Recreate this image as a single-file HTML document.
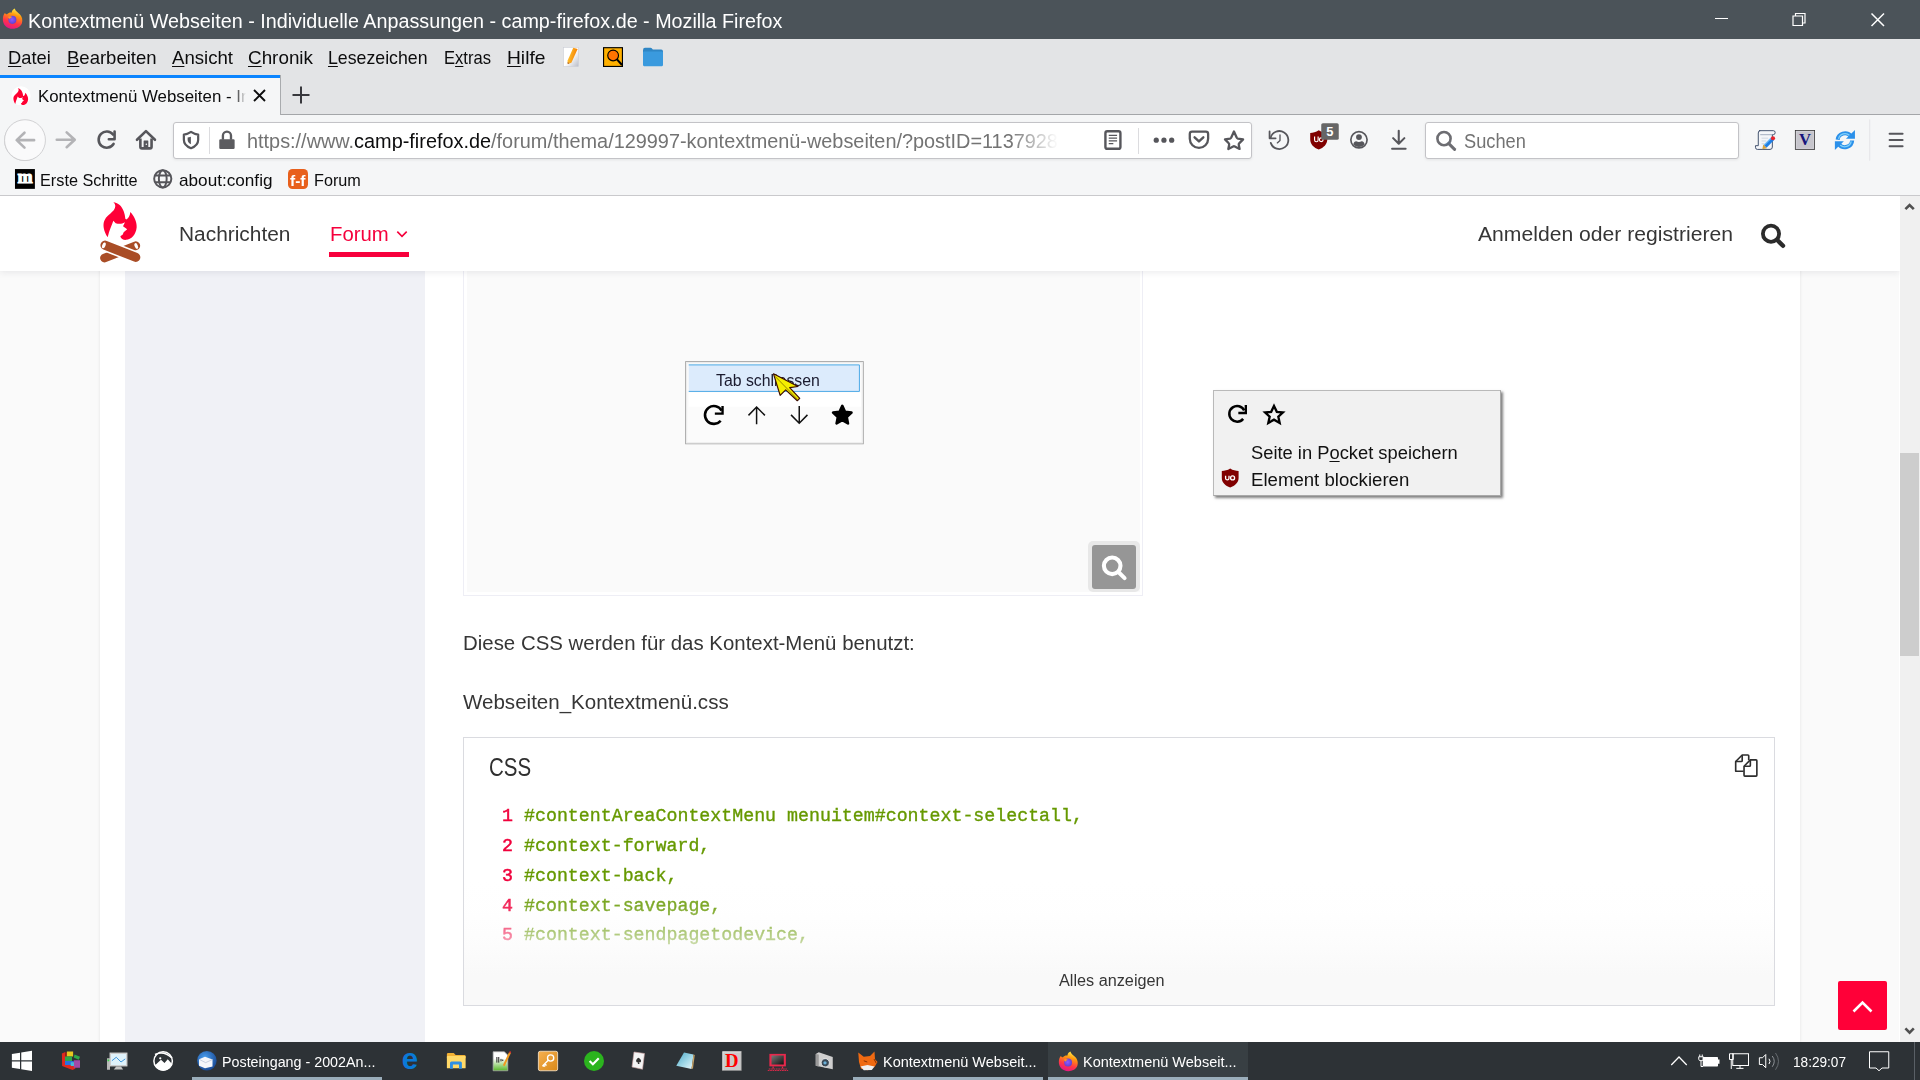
<!DOCTYPE html>
<html lang="de"><head><meta charset="utf-8"><title>Kontextmenü Webseiten - Individuelle Anpassungen - camp-firefox.de - Mozilla Firefox</title>
<style>
html,body{margin:0;padding:0;width:1920px;height:1080px;overflow:hidden;background:#fff;font-family:"Liberation Sans",sans-serif;}
body{position:relative;}
div,svg,.t{position:absolute;box-sizing:border-box;}
.t{white-space:nowrap;line-height:1;transform-origin:0 0;}
u{text-decoration:underline;text-decoration-thickness:1px;text-underline-offset:2px;}

</style></head>
<body>
<main>
<div style="left:0px;top:196px;width:1899px;height:846px;background:#fafafa;"></div>
<div style="left:100px;top:196px;width:1700px;height:846px;background:#fff;box-shadow:0 0 3px rgba(0,0,0,.10);"></div>
<div style="left:125px;top:270px;width:300px;height:772px;background:#f0f1f6;"></div>
<div style="left:463px;top:196px;width:680.3px;height:399.7px;background:#fff;border:1px solid #eeeef5;"></div>
<div style="left:466.5px;top:196px;width:673.5px;height:396px;background:#fafafa;"></div>
<div style="left:1088.2px;top:541px;width:51.4px;height:51px;background:#e8e8e8;border-radius:5px;"></div>
<div style="left:1092px;top:544.8px;width:44px;height:44.2px;background:#969696;border-radius:3px;"></div>
<svg style="left:1092px;top:544.8px;" width="44" height="44.2" viewBox="0 0 44 44.2"><circle cx="20.2" cy="20.8" r="8.3" fill="none" stroke="#fff" stroke-width="4.1"/><path d="M26.4 27 L32.6 33.2" stroke="#fff" stroke-width="4" stroke-linecap="round"/></svg>
<svg style="left:680px;top:355px;" width="190" height="95" viewBox="0 0 1920 960">
<rect x="57" y="67" width="1795" height="830" fill="#fbfbfb" stroke="#a3a3a3" stroke-width="10"/>
<rect x="67" y="77" width="1775" height="810" fill="none" stroke="#ececec" stroke-width="12"/>
<rect x="88" y="378" width="1740" height="145" fill="#ffffff"/>
<rect x="88" y="100" width="1725" height="268" fill="#dcebfc"/>
<path d="M88 100 H1813 V368 H88" fill="none" stroke="#4aa9e6" stroke-width="10"/>
<g fill="none" stroke="#000" stroke-width="26">
<path d="M421 562 A90 90 0 1 0 411 664" stroke-linecap="butt"/>
<path d="M430 516 V592 H352" stroke-width="24"/>
</g>
<g fill="none" stroke="#111" stroke-width="15">
<path d="M774 700 V525 M692 610 L774 526 L858 610"/>
<path d="M1205 515 V690 M1122 605 L1205 690 L1288 605"/>
</g>
<path d="M1640 514 L1667.6 574 L1733.2 581.7 L1684.7 626.5 L1697.6 691.3 L1640 659 L1582.4 691.3 L1595.3 626.5 L1546.8 581.7 L1612.4 574 Z" fill="#000" stroke="#000" stroke-width="26" stroke-linejoin="round"/>
</svg>
<span class="t" style="left:716.1px;top:371.66px;font-size:17.3px;color:#1a1a2e;transform:scaleX(0.9166);">Tab schliessen</span>
<svg style="left:680px;top:355px;" width="190" height="95" viewBox="0 0 1920 960">
<path d="M945 190 L1012 408 L1068 352 L1185 462 L1210 438 L1108 330 L1192 318 Z" fill="#f6ee00" stroke="#3c0c00" stroke-width="12" stroke-linejoin="round"/>
<path d="M960 215 L1190 450" stroke="#7a6a00" stroke-width="8" fill="none"/>
</svg>
<div style="left:1213px;top:390px;width:288px;height:106px;background:#f1f1f1;border:1px solid #b9b9b9;border-right-color:#a8a8a8;border-bottom-color:#a8a8a8;box-shadow:2px 2px 2.5px rgba(0,0,0,.5);"></div>
<svg style="left:1205px;top:385px;" width="160" height="80" viewBox="0 0 1920 960">
<g fill="none" stroke="#000" stroke-width="30">
<path d="M470 304 A94 94 0 1 0 458 406"/>
<path d="M490 240 V336 H400" stroke-width="28"/>
</g>
<path d="M828 252 L862 322 L935 330 L880 380 L896 455 L828 416 L760 455 L776 380 L721 330 L794 322 Z" fill="none" stroke="#000" stroke-width="28" stroke-linejoin="miter"/>
</svg>
<span class="t" style="left:1251.2px;top:443.76px;font-size:18px;color:#111;transform:scaleX(1.0181);">Seite in P<u>o</u>cket speichern</span>
<span class="t" style="left:1251.4px;top:471.46px;font-size:18px;color:#111;transform:scaleX(1.0340);">Element blockieren</span>
<svg style="left:1220.8px;top:468px;" width="18.4" height="20" viewBox="0 0 18.4 20"><path d="M9.2 0.6 C6.5 2.4 3.6 3 0.8 3 V10 C0.8 14.6 4.4 17.6 9.2 19.6 C14 17.6 17.6 14.6 17.6 10 V3 C14.8 3 11.9 2.4 9.2 0.6 Z" fill="#800000"/><path d="M4.6 7.8 V10.2 A1.7 1.7 0 0 0 8 10.2 V7.8" fill="none" stroke="#fff" stroke-width="1.3"/><circle cx="11.6" cy="9.9" r="2" fill="none" stroke="#fff" stroke-width="1.3"/></svg>
<div style="left:0px;top:196px;width:1900px;height:75px;background:#fff;box-shadow:0 1px 7px rgba(40,40,60,.10);"></div>
<span class="t" style="left:179.4px;top:223.87px;font-size:20px;color:#363636;transform:scaleX(1.0439);">Nachrichten</span>
<span class="t" style="left:329.6px;top:223.87px;font-size:20px;color:#f5003c;transform:scaleX(1.0156);">Forum</span>
<svg style="left:396px;top:229.5px;" width="12" height="8.5" viewBox="0 0 12 8.5"><path d="M1.3 1.6 L6 6.3 L10.7 1.6" fill="none" stroke="#f5003c" stroke-width="1.6"/></svg>
<div style="left:329px;top:251.7px;width:80px;height:5.8px;background:#f8003c;"></div>
<span class="t" style="left:1477.5px;top:223.87px;font-size:20px;color:#363636;transform:scaleX(1.0570);">Anmelden oder registrieren</span>
<svg style="left:1760px;top:223px;" width="26" height="26" viewBox="0 0 26 26"><circle cx="11" cy="10.7" r="8.1" fill="none" stroke="#2b2b2b" stroke-width="3.8"/><path d="M17 16.8 L23 22.8" stroke="#2b2b2b" stroke-width="4.4" stroke-linecap="round"/></svg>
<span class="t" style="left:462.7px;top:634.09px;font-size:19.5px;color:#363636;transform:scaleX(1.0473);">Diese CSS werden für das Kontext-Menü benutzt:</span>
<span class="t" style="left:462.8px;top:693.09px;font-size:19.5px;color:#363636;transform:scaleX(1.0535);">Webseiten_Kontextmenü.css</span>
<div style="left:463px;top:737px;width:1312px;height:268.5px;background:#fff;border:1px solid #dadbe0;"></div>
<svg style="left:1720px;top:744px;" width="60" height="44" viewBox="0 0 1473 1080"><g fill="none" stroke="#2e2e2e" stroke-width="40" stroke-linejoin="round"><path d="M705 400 V290 Q705 270 685 270 H545 L385 430 V670 H580"/><path d="M545 270 V410 Q545 430 525 430 H385"/><path d="M745 390 H885 Q905 390 905 410 V770 Q905 790 885 790 H610 Q590 790 590 770 V545 Z"/><path d="M745 390 V525 Q745 545 725 545 H590"/></g></svg>
<span class="t" style="left:489.4px;top:754.84px;font-size:25px;color:#2f2f2f;transform:scaleX(0.8190);">CSS</span>
<span class="t" style="left:502.3px;top:807.08px;font-size:18.27px;color:#f0003c;font-family:'Liberation Mono', monospace;transform:scaleX(0.9992);-webkit-text-stroke:0.5px #f0003c;">1</span>
<span class="t" style="left:524.2px;top:807.08px;font-size:18.27px;color:#669900;font-family:'Liberation Mono', monospace;transform:scaleX(0.9999);-webkit-text-stroke:0.35px #669900;">#contentAreaContextMenu menuitem#context-selectall,</span>
<span class="t" style="left:502.3px;top:836.98px;font-size:18.27px;color:#f0003c;font-family:'Liberation Mono', monospace;transform:scaleX(0.9992);-webkit-text-stroke:0.5px #f0003c;">2</span>
<span class="t" style="left:524.2px;top:836.98px;font-size:18.27px;color:#669900;font-family:'Liberation Mono', monospace;transform:scaleX(0.9999);-webkit-text-stroke:0.35px #669900;">#context-forward,</span>
<span class="t" style="left:502.3px;top:866.78px;font-size:18.27px;color:#f0003c;font-family:'Liberation Mono', monospace;transform:scaleX(0.9992);-webkit-text-stroke:0.5px #f0003c;">3</span>
<span class="t" style="left:524.2px;top:866.78px;font-size:18.27px;color:#669900;font-family:'Liberation Mono', monospace;transform:scaleX(0.9998);-webkit-text-stroke:0.35px #669900;">#context-back,</span>
<span class="t" style="left:502.3px;top:896.58px;font-size:18.27px;color:#f0003c;font-family:'Liberation Mono', monospace;transform:scaleX(0.9992);-webkit-text-stroke:0.5px #f0003c;">4</span>
<span class="t" style="left:524.2px;top:896.58px;font-size:18.27px;color:#669900;font-family:'Liberation Mono', monospace;transform:scaleX(0.9998);-webkit-text-stroke:0.35px #669900;">#context-savepage,</span>
<span class="t" style="left:502.3px;top:926.38px;font-size:18.27px;color:#f0003c;font-family:'Liberation Mono', monospace;transform:scaleX(0.9992);-webkit-text-stroke:0.5px #f0003c;">5</span>
<span class="t" style="left:524.2px;top:926.38px;font-size:18.27px;color:#669900;font-family:'Liberation Mono', monospace;transform:scaleX(0.9999);-webkit-text-stroke:0.35px #669900;">#context-sendpagetodevice,</span>
<div style="left:464px;top:880px;width:1310px;height:124.5px;background:linear-gradient(to bottom,rgba(252,252,252,0) 0%,rgba(252,252,252,.2) 25%,rgba(251,251,251,.6) 49%,rgba(250,250,250,.95) 68%,#f9f9f9 76%,#f9f9f9 100%);"></div>
<span class="t" style="left:1059.4px;top:972.76px;font-size:16px;color:#363636;transform:scaleX(1.0146);">Alles anzeigen</span>
<div style="left:1838px;top:981px;width:49px;height:49px;background:#ff0038;border-radius:2px;"></div>
<svg style="left:1850px;top:998px;" width="25" height="17" viewBox="0 0 25 17"><path d="M3.5 13.5 L12.5 4.5 L21.5 13.5" fill="none" stroke="#fff" stroke-width="2.6"/></svg>
<div style="left:1900px;top:196px;width:20px;height:846px;background:#f0f0f0;"></div>
<div style="left:1900px;top:453px;width:19px;height:203px;background:#cdcdcd;"></div>
<svg style="left:1903px;top:201px;" width="14" height="10" viewBox="0 0 14 10"><path d="M2.4 8.2 L6.6 4 L10.8 8.2" fill="none" stroke="#505050" stroke-width="2.6"/></svg>
<svg style="left:1903px;top:1026px;" width="14" height="10" viewBox="0 0 14 10"><path d="M2.4 2.4 L6.6 6.6 L10.8 2.4" fill="none" stroke="#505050" stroke-width="2.6"/></svg>
</main>
<header>
<div style="left:0px;top:0px;width:1920px;height:39px;background:#4b5359;"></div>
<span class="t" style="left:27.6px;top:11.98px;font-size:19.4px;color:#fff;transform:scaleX(1.0178);">Kontextmenü Webseiten - Individuelle Anpassungen - camp-firefox.de - Mozilla Firefox</span>
<div style="left:1715px;top:18px;width:13px;height:1px;background:#fff;"></div>
<svg style="left:1792px;top:12px;" width="14" height="14" viewBox="0 0 14 14"><path d="M1 4 H10.5 V13.5 H1 Z M3.5 4 V1.5 H13 V11 H10.5" fill="none" stroke="#fff" stroke-width="1.2"/></svg>
<svg style="left:1870px;top:11.5px;" width="16" height="15.0" viewBox="0 0 16 15.0"><path d="M1.5 1.5 L14 14 M14 1.5 L1.5 14" stroke="#fff" stroke-width="1.5"/></svg>
<div style="left:0px;top:39px;width:1920px;height:75.5px;background:#e3e4e6;"></div>
<span class="t" style="left:8.3px;top:49.19px;font-size:18.2px;color:#0c0c0d;transform:scaleX(1.0054);"><u>D</u>atei</span>
<span class="t" style="left:66.5px;top:49.19px;font-size:18.2px;color:#0c0c0d;transform:scaleX(1.0172);"><u>B</u>earbeiten</span>
<span class="t" style="left:171.5px;top:49.19px;font-size:18.2px;color:#0c0c0d;transform:scaleX(1.0225);"><u>A</u>nsicht</span>
<span class="t" style="left:248px;top:49.19px;font-size:18.2px;color:#0c0c0d;transform:scaleX(1.0369);"><u>C</u>hronik</span>
<span class="t" style="left:328px;top:49.19px;font-size:18.2px;color:#0c0c0d;transform:scaleX(0.9741);"><u>L</u>esezeichen</span>
<span class="t" style="left:444px;top:49.19px;font-size:18.2px;color:#0c0c0d;transform:scaleX(0.9115);">E<u>x</u>tras</span>
<span class="t" style="left:507px;top:49.19px;font-size:18.2px;color:#0c0c0d;transform:scaleX(1.0552);"><u>H</u>ilfe</span>
<div style="left:0px;top:114px;width:1920px;height:1px;background:#a4a6a9;"></div>
<div style="left:0px;top:75px;width:280.5px;height:40px;background:#f5f6f7;border-right:1px solid #a9abae;"></div>
<div style="left:0px;top:75px;width:280px;height:3px;background:#0a84ff;"></div>
<div style="left:38.4px;top:84px;width:209px;height:26px;overflow:hidden;-webkit-mask-image:linear-gradient(to right,#000 0,#000 196px,transparent 208px);mask-image:linear-gradient(to right,#000 0,#000 196px,transparent 208px);">
<span class="t" style="left:0px;top:4.55px;font-size:16.6px;color:#0c0c0d;transform:scaleX(1.0155);">Kontextmenü Webseiten - Individuelle</span>
</div>
<svg style="left:252px;top:89px;" width="15" height="13" viewBox="0 0 15 13"><path d="M2 1 L13 12 M13 1 L2 12" stroke="#0c0c0d" stroke-width="1.9"/></svg>
<svg style="left:291px;top:84.5px;" width="20" height="20.0" viewBox="0 0 20 20.0"><path d="M10 1.5 V18.5 M1.5 10 H18.5" stroke="#38383d" stroke-width="2"/></svg>
<div style="left:0px;top:115px;width:1920px;height:80px;background:#f5f6f7;"></div>
<div style="left:0px;top:195px;width:1920px;height:1px;background:#c9c9cc;"></div>
<div style="left:4.3px;top:119.8px;width:41.2px;height:41.2px;border:1px solid #cfcfd2;border-radius:50%;background:#fbfbfc;"></div>
<div style="left:173px;top:122px;width:1079px;height:37px;background:#fff;border:1px solid #c3c3c7;border-radius:3px;box-shadow:0 1px 3px rgba(0,0,0,.08);"></div>
<div style="left:209px;top:127px;width:1px;height:26.5px;background:#dcdcdf;"></div>
<div style="left:1138px;top:128.3px;width:1px;height:25.4px;background:#dcdcdf;"></div>
<span class="t" style="left:246.6px;top:130.65px;font-size:20.5px;color:#0c0c0d;transform:scaleX(0.9693);-webkit-mask-image:linear-gradient(to right,#000 0,#000 94%,transparent 100%);"><span style="color:#737373">https://www.</span>camp-firefox.de<span style="color:#737373">/forum/thema/129997-kontextmenü-webseiten/?postID=1137928</span></span>
<div style="left:1425px;top:122px;width:314px;height:37px;background:#fff;border:1px solid #c3c3c7;border-radius:3px;box-shadow:0 1px 3px rgba(0,0,0,.08);"></div>
<span class="t" style="left:1464.2px;top:130.65px;font-size:20.5px;color:#737373;transform:scaleX(0.8888);">Suchen</span>
<svg style="left:0px;top:115px;" width="250" height="80" viewBox="0 0 1920 614">
<circle cx="192" cy="193" r="157" fill="#fafafb" stroke="#cdcdd0" stroke-width="7"/>
<g fill="none" stroke="#b3b3b6" stroke-width="20" stroke-linecap="round" stroke-linejoin="round">
<path d="M130 193 H262 M188 136 L128 193 L188 250"/>
<path d="M436 190 H570 M512 133 L574 190 L512 247"/>
</g>
<g fill="none" stroke="#56565b" stroke-width="20">
<path d="M868 150 A62 62 0 1 0 872 222" stroke-linecap="round"/>
<path d="M880 127 V186 H836" stroke-linejoin="round" stroke-linecap="round"/>
<path d="M1052 190 L1121 124 L1190 190" stroke-linecap="round" stroke-linejoin="round"/>
<path d="M1078 180 V244 Q1078 256 1090 256 H1152 Q1164 256 1164 244 V180" stroke-linejoin="round"/>
</g>
<rect x="1103" y="196" width="36" height="56" rx="4" fill="#56565b"/>
<circle cx="1124" cy="225" r="6" fill="#f5f6f7"/>
<path d="M1467 130 C1445 145 1425 150 1412 150 V190 C1412 222 1440 245 1467 255 C1494 245 1522 222 1522 190 V150 C1509 150 1489 145 1467 130 Z" fill="none" stroke="#56565b" stroke-width="17" stroke-linejoin="round"/>
<path d="M1466 166 C1456 170 1448 172 1441 172 V192 C1441 206 1452 218 1466 225 Z" fill="#56565b"/>
<rect x="1684" y="186" width="118" height="74" rx="9" fill="#5b5b5f"/>
<path d="M1712 190 V158 A31 31 0 0 1 1774 158 V190" fill="none" stroke="#5b5b5f" stroke-width="18"/>
<rect x="115" y="415" width="153" height="152" fill="#000"/>
<text x="192" y="525" font-family="'Liberation Serif',serif" font-weight="bold" font-size="150" fill="#fff" stroke="#fff" stroke-width="9" text-anchor="middle" textLength="116" lengthAdjust="spacingAndGlyphs">m</text>
<g fill="none" stroke="#55555a" stroke-width="15">
<circle cx="1250" cy="490" r="66"/>
<ellipse cx="1250" cy="490" rx="30" ry="66"/>
<path d="M1190 465 H1310 M1190 516 H1310"/>
</g>
</svg>
<svg style="left:1040px;top:110px;" width="400" height="90" viewBox="0 0 1920 432">
<g fill="none" stroke="#56565b">
<rect x="314" y="102" width="72" height="84" rx="9" stroke-width="11.5"/>
<path d="M330 122 H370 M330 135 H370 M330 148 H370 M330 161 H352" stroke-width="6"/>
</g>
<g fill="#56565b"><circle cx="558" cy="145" r="12.5"/><circle cx="595" cy="145" r="12.5"/><circle cx="632" cy="145" r="12.5"/></g>
<path d="M730 104 H796 Q807 104 807 115 V138 A44 44 0 0 1 719 138 V115 Q719 104 730 104 Z" fill="none" stroke="#56565b" stroke-width="11"/>
<path d="M742 131 L763 151 L784 131" fill="none" stroke="#56565b" stroke-width="11.5" stroke-linecap="round" stroke-linejoin="round"/>
<path d="M931 103 L944 132 Q946 136 950 137 L975 141 L956 160 Q953 163 954 167 L958 187 L935 175 Q931 173 927 175 L904 187 L908 167 Q909 163 906 160 L888 141 L912 137 Q916 136 918 132 Z" fill="none" stroke="#56565b" stroke-width="11" stroke-linejoin="round"/>
<g fill="none" stroke="#56565b" stroke-width="8.6" stroke-linecap="round" stroke-linejoin="round">
<path d="M1106.5 135.4 A43.2 43.2 0 1 1 1107.7 157.8"/>
<path d="M1102 103 V136 H1131"/>
<path d="M1152 119 V146 L1139 158" stroke-width="6.4"/>
</g>
<path d="M1338 97 C1324 106 1310 110 1297 110 V140 C1297 165 1315 180 1338 190 C1361 180 1379 165 1379 140 V110 C1366 110 1352 106 1338 97 Z" fill="#800000"/>
<path d="M1318 127 V144 A8.5 8.5 0 0 0 1335 144 V127" fill="none" stroke="#fff" stroke-width="5.5"/>
<circle cx="1350" cy="143" r="9" fill="none" stroke="#fff" stroke-width="5.5"/>
<rect x="1350" y="63" width="84" height="80" rx="8" fill="#666"/>
<text x="1391" y="125" font-family="'Liberation Sans',sans-serif" font-weight="bold" font-size="62" fill="#fff" text-anchor="middle">5</text>
<circle cx="1531" cy="143" r="39" fill="none" stroke="#56565b" stroke-width="8"/>
<circle cx="1531" cy="130" r="14" fill="#56565b"/>
<path d="M1504 166 Q1505 152 1518 150 Q1531 156 1544 150 Q1557 152 1558 166 Q1546 178 1531 178 Q1516 178 1504 166 Z" fill="#56565b"/>
<g fill="none" stroke="#56565b" stroke-width="10" stroke-linecap="round" stroke-linejoin="round">
<path d="M1722 100 V160 M1695 135 L1722 162 L1749 135"/>
<path d="M1690 186 H1755"/>
</g>
</svg>
<svg style="left:1740px;top:118px;" width="180" height="45" viewBox="0 0 1920 480">
<path d="M205 135 H355 Q375 135 375 155 Q375 178 355 178 H345 V310 Q345 335 320 335 H185 Q165 335 165 312 V295 H195 V160 Q195 135 215 135 Z" fill="#f3f5f9" stroke="#3a4a66" stroke-width="10" stroke-linejoin="round"/>
<path d="M215 178 H345" stroke="#8a97ad" stroke-width="8"/>
<path d="M230 215 H300 M230 245 H280 M230 275 H260" stroke="#c3ccda" stroke-width="8"/>
<path d="M352 218 L268 302" stroke="#1f7fe6" stroke-width="42"/>
<path d="M340 206 L258 290" stroke="#7cc0f7" stroke-width="12"/>
<circle cx="352" cy="216" r="22" fill="#e8242c"/>
<path d="M248 282 L288 322 L238 334 Z" fill="#d9a441"/>
<rect x="590" y="132" width="206" height="204" fill="#c6c5cc" stroke="#2e2e2e" stroke-width="8"/>
<rect x="604" y="146" width="178" height="176" fill="none" stroke="#d6d5da" stroke-width="6"/>
<text x="693" y="293" font-family="'Liberation Serif',serif" font-weight="bold" font-size="170" fill="#15157c" text-anchor="middle" textLength="128" lengthAdjust="spacingAndGlyphs">V</text>
<g fill="none" stroke="#2b90ea" stroke-width="44">
<path d="M1042 232 A78 74 0 0 1 1180 190"/>
<path d="M1196 240 A78 74 0 0 1 1058 284"/>
</g>
<g fill="none" stroke="#7fd0fa" stroke-width="14">
<path d="M1052 222 A70 66 0 0 1 1170 186"/>
<path d="M1186 250 A70 66 0 0 1 1068 288"/>
</g>
<path d="M1226 128 V222 H1130 Z" fill="#2b90ea"/>
<path d="M1012 340 V248 H1108 Z" fill="#2b90ea"/>
<path d="M1383 15 V455" stroke="#d5d5d9" stroke-width="5"/>
<g stroke="#56565b" stroke-width="22" stroke-linecap="round"><path d="M1596 167 H1734 M1596 235 H1734 M1596 301 H1734"/></g>
</svg>
<svg style="left:1430px;top:125px;" width="30" height="30" viewBox="0 0 30 30"><circle cx="14" cy="13.6" r="6.6" fill="none" stroke="#6d6d72" stroke-width="2.6"/><path d="M18.8 18.6 L24.6 24.4" stroke="#6d6d72" stroke-width="3" stroke-linecap="round"/></svg>
<svg style="left:1.6px;top:8.4px;" width="21.2" height="21.2" viewBox="0 0 100 100">
<defs><linearGradient id="fg1" x1="0.7" y1="0" x2="0.35" y2="1"><stop offset="0" stop-color="#fff44f"/><stop offset="0.32" stop-color="#ff980e"/><stop offset="0.68" stop-color="#ff3647"/><stop offset="1" stop-color="#e31587"/></linearGradient>
<radialGradient id="fp1" cx="0.45" cy="0.45" r="0.6"><stop offset="0" stop-color="#9059ff"/><stop offset="1" stop-color="#5b3fd0"/></radialGradient></defs>
<path d="M50 98 C22 98 4 78 4 54 C4 40 8 30 14 24 C16 28 20 30 24 30 C30 22 40 20 46 22 C46 12 52 6 60 2 C64 16 76 20 86 32 C96 44 98 58 94 72 C88 88 70 98 50 98 Z" fill="url(#fg1)"/>
<circle cx="49" cy="56" r="19" fill="url(#fp1)"/>
<path d="M28 42 C34 38 42 38 48 42 C42 44 38 48 36 52 Z" fill="#ff9a1f"/>
</svg>
<svg style="left:11px;top:85.6px;" width="20" height="19.8" viewBox="0 0 20 19.8"><circle cx="10" cy="9.8" r="9.6" fill="#fff"/><g transform="translate(-3.6,-0.4) scale(0.0296,0.0296)"><path d="M350 92 C400 130 380 190 340 230 C300 275 240 310 215 370 C190 430 200 520 265 620 L285 545 C300 500 330 430 350 372 L385 410 C420 420 460 420 485 412 L525 392 L495 452 L558 500 L505 545 L492 578 L455 602 C460 640 500 660 540 658 C620 655 690 580 700 470 C705 380 660 300 605 240 C600 300 570 340 545 352 L530 340 C525 270 500 180 440 130 C410 105 380 95 350 92 Z" fill="#ff0032"/></g></svg>
<svg style="left:90px;top:196px;" width="60" height="72" viewBox="0 0 900 1080"><path d="M350 92 C400 130 380 190 340 230 C300 275 240 310 215 370 C190 430 200 520 265 620 L285 545 C300 500 330 430 350 372 L385 410 C420 420 460 420 485 412 L525 392 L495 452 L558 500 L505 545 L492 578 L455 602 C460 640 500 660 540 658 C620 655 690 580 700 470 C705 380 660 300 605 240 C600 300 570 340 545 352 L530 340 C525 270 500 180 440 130 C410 105 380 95 350 92 Z" fill="#ff0037"/>
<path d="M218 930 L686 746" stroke="#a94d26" stroke-width="132" stroke-linecap="round"/>
<path d="M226 738 L686 920" stroke="#fff" stroke-width="186" stroke-linecap="butt"/>
<path d="M226 738 L686 920" stroke="#a94d26" stroke-width="138" stroke-linecap="round"/>
<ellipse cx="208" cy="740" rx="24" ry="46" transform="rotate(22 208 740)" fill="#fff"/>
<ellipse cx="694" cy="750" rx="24" ry="46" transform="rotate(-22 694 750)" fill="#fff"/>
</svg>
<svg style="left:555px;top:42px;" width="120" height="30" viewBox="0 0 1920 480">
<defs><linearGradient id="pg" x1="0" y1="0" x2="1" y2="1"><stop offset="0.5" stop-color="#fff"/><stop offset="1" stop-color="#b9bdc9"/></linearGradient>
<linearGradient id="pn" x1="0" y1="0" x2="1" y2="0.3"><stop offset="0" stop-color="#ffd23c"/><stop offset="1" stop-color="#f57c00"/></linearGradient></defs>
<rect x="138" y="88" width="236" height="304" fill="url(#pg)" stroke="#c7cad3" stroke-width="8"/>
<path d="M292 92 L362 110 L262 330 L205 350 L200 300 Z" fill="url(#pn)"/>
<path d="M205 350 L200 318 L230 340 Z" fill="#a0522d"/>
<rect x="777" y="91" width="302" height="300" fill="#ffb000" stroke="#000" stroke-width="18"/>
<circle cx="930" cy="215" r="86" fill="#ff7400" stroke="#000" stroke-width="18"/>
<path d="M992 278 L1072 368" stroke="#000" stroke-width="34"/>
<path d="M1408 130 Q1408 92 1440 92 H1530 Q1550 92 1565 120 H1700 Q1728 120 1728 150 V200 H1408 Z" fill="#2f86c5"/>
<rect x="1408" y="150" width="320" height="236" rx="18" fill="#3a9ade"/>
</svg>
<div style="left:288px;top:168.9px;width:20px;height:19.9px;background:#e8601c;border-radius:4.5px;"></div>
<span class="t" style="left:290.3px;top:172.7px;font-size:15px;color:#fff;transform:scaleX(1.0333);font-weight:bold;">f-f</span>
<span class="t" style="left:40px;top:172.55px;font-size:16.6px;color:#0c0c0d;transform:scaleX(0.9798);">Erste Schritte</span>
<span class="t" style="left:178.5px;top:172.55px;font-size:16.6px;color:#0c0c0d;transform:scaleX(1.0340);">about:config</span>
<span class="t" style="left:313.5px;top:172.55px;font-size:16.6px;color:#0c0c0d;transform:scaleX(0.9780);">Forum</span>
</header>
<footer>
<div style="left:0px;top:1042px;width:1920px;height:38px;background:#2d3236;"></div>
<div style="left:1048px;top:1042px;width:200px;height:38px;background:#383f43;"></div>
<div style="left:192.3px;top:1077px;width:189.7px;height:3px;background:#9aadba;"></div>
<div style="left:853px;top:1077px;width:190px;height:3px;background:#9aadba;"></div>
<div style="left:1048px;top:1077px;width:200px;height:3px;background:#9aadba;"></div>
<span class="t" style="left:221.6px;top:1054.28px;font-size:15.5px;color:#fff;transform:scaleX(0.9223);">Posteingang - 2002An...</span>
<span class="t" style="left:882.5px;top:1054.28px;font-size:15.5px;color:#fff;transform:scaleX(0.9344);">Kontextmenü Webseit...</span>
<span class="t" style="left:1082.5px;top:1054.28px;font-size:15.5px;color:#fff;transform:scaleX(0.9344);">Kontextmenü Webseit...</span>
<span class="t" style="left:1792.5px;top:1053.88px;font-size:15.5px;color:#fff;transform:scaleX(0.8783);">18:29:07</span>
<div style="left:1914px;top:1042px;width:1px;height:38px;background:#5a6066;"></div>
<svg style="left:0px;top:1042px;" width="240" height="38" viewBox="0 0 1920 304">
<g fill="#fff"><path d="M95 96 L160 86 V146 H95 Z"/><path d="M170 84 L256 70 V146 H170 Z"/><path d="M95 156 H160 V216 L95 206 Z"/><path d="M170 156 H256 V232 L170 218 Z"/></g>
<path d="M495 92 L522 80 V168 L602 196 V214 L580 224 L497 192 Z" fill="#e0281e"/>
<path d="M522 80 L535 86 V170 L522 168 Z" fill="#a81a14"/>
<rect x="535" y="76" width="50" height="40" fill="#e8c81e"/>
<rect x="520" y="116" width="56" height="38" fill="#2ea84a"/>
<rect x="520" y="152" width="70" height="32" fill="#2c6fe0"/>
<path d="M596 100 L640 118 L630 142 L590 124 Z" fill="#2ea84a"/>
<rect x="590" y="146" width="50" height="60" fill="#a04aa8"/>
<rect x="566" y="162" width="26" height="30" fill="#48b8d8"/>
<rect x="856" y="130" width="24" height="92" fill="#b8b8b8"/><rect x="860" y="140" width="16" height="14" fill="#38d048"/>
<rect x="882" y="90" width="132" height="100" fill="#dff2fb" stroke="#cfcfcf" stroke-width="11"/>
<path d="M895 150 L930 122 L968 160 L1002 135" fill="none" stroke="#2a8ad8" stroke-width="7"/>
<path d="M930 196 H968 L985 220 H910 Z" fill="#c4c4c4"/>
<circle cx="1305" cy="152" r="74" fill="none" stroke="#fff" stroke-width="12"/>
<path d="M1238 188 L1288 142 L1316 168 L1342 138 L1378 178 A76 76 0 0 1 1250 204 Z" fill="#fff"/>
<path d="M1240 100 Q1310 66 1376 128" fill="none" stroke="#fff" stroke-width="12"/>
<circle cx="1282" cy="130" r="9" fill="#fff"/>
<defs><radialGradient id="tb" cx="0.4" cy="0.35" r="0.7"><stop offset="0" stop-color="#4aa0f0"/><stop offset="1" stop-color="#17458f"/></radialGradient></defs>
<circle cx="1655" cy="150" r="78" fill="url(#tb)"/>
<path d="M1592 138 L1640 118 L1700 140 V196 L1640 210 L1592 190 Z" fill="#f4f6fa"/>
<path d="M1592 138 L1645 165 L1700 140" fill="none" stroke="#b8c4d8" stroke-width="6"/>
</svg>
<svg style="left:380px;top:1042px;" width="240" height="38" viewBox="0 0 1920 304">
<text x="240" y="216" font-family="'Liberation Sans',sans-serif" font-weight="bold" font-size="236" fill="#0a7ad8" text-anchor="middle">e</text>
<path d="M535 98 Q535 88 545 88 H590 L605 104 H675 Q685 104 685 114 V130 H535 Z" fill="#f2b134"/>
<rect x="535" y="112" width="150" height="98" rx="5" fill="#ffd968"/>
<path d="M560 168 Q560 156 572 156 H643 Q655 156 655 168 V214 H632 V180 H583 V214 H560 Z" fill="#2d8fe4"/>
<defs><linearGradient id="np" x1="0" y1="0" x2="0" y2="1"><stop offset="0.35" stop-color="#fff"/><stop offset="1" stop-color="#58b828"/></linearGradient>
<linearGradient id="ky" x1="0" y1="0" x2="1" y2="1"><stop offset="0" stop-color="#f6b050"/><stop offset="1" stop-color="#d88818"/></linearGradient></defs>
<path d="M905 78 H995 L1022 105 V230 H905 Z" fill="url(#np)" stroke="#b0b0b0" stroke-width="6"/>
<path d="M935 120 V165 M950 120 V165 M968 135 V155 M982 140 V152" stroke="#222" stroke-width="8"/>
<path d="M1040 84 L990 190" stroke="#f09a20" stroke-width="16"/><circle cx="1041" cy="82" r="8" fill="#d03030"/>
<rect x="1267" y="74" width="154" height="156" rx="14" fill="url(#ky)" stroke="#f6dfc0" stroke-width="7"/>
<g fill="none" stroke="#fff" stroke-width="11"><circle cx="1365" cy="128" r="25"/><path d="M1346 146 L1300 192 M1300 192 H1322 M1318 174 L1332 188"/></g>
<circle cx="1712" cy="152" r="80" fill="#2bb41e"/>
<path d="M1677 152 L1703 178 L1750 130" fill="none" stroke="#fff" stroke-width="17"/>
</svg>
<svg style="left:620px;top:1042px;" width="240" height="38" viewBox="0 0 1920 304">
<path d="M112 80 L196 92 L180 218 L96 200 Z" fill="#f4f4f4" stroke="#c8a0a0" stroke-width="5"/>
<path d="M140 130 Q120 150 135 162 Q142 166 146 160 L142 176 H156 L152 160 Q160 166 166 160 Q176 146 150 126 Z" fill="#333"/>
<defs><linearGradient id="nb" x1="0" y1="0" x2="1" y2="1"><stop offset="0" stop-color="#4aa8c8"/><stop offset="0.6" stop-color="#a8dcea"/><stop offset="1" stop-color="#eef8fb"/></linearGradient>
<linearGradient id="sc" x1="0" y1="0" x2="1" y2="1"><stop offset="0" stop-color="#777"/><stop offset="1" stop-color="#111"/></linearGradient></defs>
<path d="M512 84 L588 100 L572 216 L450 190 Z" fill="url(#nb)"/>
<path d="M588 100 L598 104 L584 212 L572 216 Z" fill="#c8a468"/>
<rect x="820" y="76" width="150" height="152" fill="#cacaca" stroke="#8a8a8a" stroke-width="6"/>
<path d="M823 225 V79 H967" fill="none" stroke="#efefef" stroke-width="6"/>
<text x="895" y="200" font-family="'Liberation Serif',serif" font-weight="bold" font-size="150" fill="#f00" text-anchor="middle">D</text>
<rect x="1195" y="95" width="132" height="100" fill="#e8284c"/>
<rect x="1212" y="108" width="98" height="72" fill="url(#sc)"/>
<path d="M1190 216 H1335 M1182 228 H1345" stroke="#e8284c" stroke-width="7" stroke-dasharray="14 5"/>
<path d="M1225 196 V212 M1300 196 V212" stroke="#e8284c" stroke-width="10"/>
<path d="M1566 96 L1590 82 L1702 120 V218 L1566 190 Z" fill="#cfcfcf"/>
<path d="M1566 96 L1590 100 V196 L1566 190 Z" fill="#9a9a9a"/>
<circle cx="1642" cy="166" r="33" fill="#3a4a58" stroke="#eee" stroke-width="7"/><circle cx="1640" cy="166" r="13" fill="#6ab0d8"/>
</svg>
<svg style="left:845px;top:1042px;" width="40" height="38" viewBox="0 0 320 304">
<path d="M106 84 L150 118 L200 112 L236 76 L240 138 L260 160 L236 200 L180 226 L128 214 L112 160 Z" fill="#f06a12"/>
<path d="M124 196 L180 184 L236 196 L214 224 L150 226 Z" fill="#f0f0f0"/>
<path d="M150 150 L178 160 M232 136 L250 170" stroke="#7a2a00" stroke-width="7"/>
</svg>
<svg style="left:1057.6px;top:1051px;" width="20.6" height="20.6" viewBox="0 0 100 100">
<defs><linearGradient id="fg2" x1="0.7" y1="0" x2="0.35" y2="1"><stop offset="0" stop-color="#fff44f"/><stop offset="0.32" stop-color="#ff980e"/><stop offset="0.68" stop-color="#ff3647"/><stop offset="1" stop-color="#e31587"/></linearGradient>
<radialGradient id="fp2" cx="0.45" cy="0.45" r="0.6"><stop offset="0" stop-color="#9059ff"/><stop offset="1" stop-color="#5b3fd0"/></radialGradient></defs>
<path d="M50 98 C22 98 4 78 4 54 C4 40 8 30 14 24 C16 28 20 30 24 30 C30 22 40 20 46 22 C46 12 52 6 60 2 C64 16 76 20 86 32 C96 44 98 58 94 72 C88 88 70 98 50 98 Z" fill="url(#fg2)"/>
<circle cx="49" cy="56" r="19" fill="url(#fp2)"/>
<path d="M28 42 C34 38 42 38 48 42 C42 44 38 48 36 52 Z" fill="#ff9a1f"/>
</svg>
<svg style="left:1660px;top:1042px;" width="240" height="38" viewBox="0 0 1920 304">
<path d="M90 184 L152 120 L214 184" fill="none" stroke="#fff" stroke-width="10"/>
<rect x="342" y="120" width="122" height="76" rx="6" fill="#fff"/><rect x="464" y="140" width="12" height="34" fill="#fff"/>
<path d="M318 100 V118 M338 100 V118 M310 118 H346 V138 Q346 150 328 150 Q310 150 310 138 Z M328 150 V196 H345" fill="none" stroke="#fff" stroke-width="8"/>
<g fill="none" stroke="#fff" stroke-width="8"><rect x="582" y="94" width="126" height="94"/><path d="M640 188 V210 M610 211 H668 M556 94 H586 V140 H556 Z M570 140 V216"/></g>
<path d="M795 126 H820 L846 100 V206 L820 180 H795 Z" fill="none" stroke="#fff" stroke-width="8" stroke-linejoin="round"/>
<path d="M872 134 Q888 154 872 176" fill="none" stroke="#fff" stroke-width="8"/>
<path d="M898 112 Q930 154 898 198" fill="none" stroke="#9a9fa4" stroke-width="7"/>
<path d="M924 88 Q972 154 924 222" fill="none" stroke="#6e7378" stroke-width="7"/>
<path d="M1676 78 H1830 V208 H1776 L1752 230 L1728 208 H1676 Z" fill="none" stroke="#fff" stroke-width="8"/>
</svg>
</footer>
</body></html>
